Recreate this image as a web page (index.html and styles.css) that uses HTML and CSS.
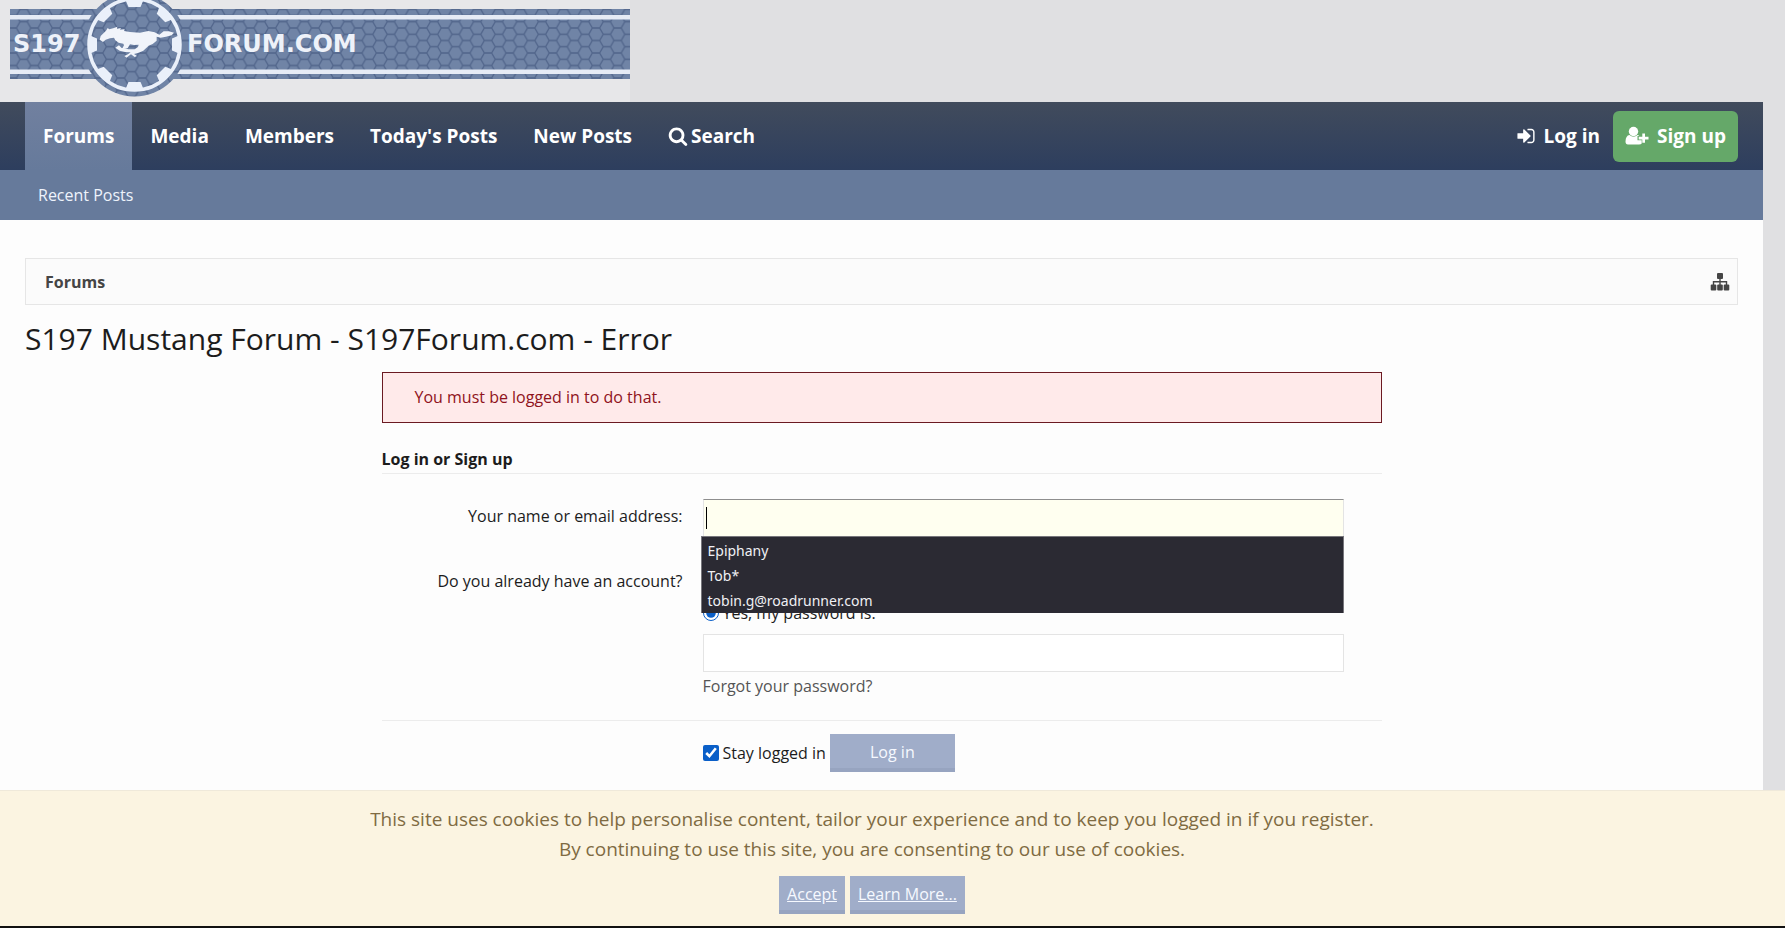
FILE: index.html
```html
<!DOCTYPE html>
<html lang="en">
<head>
    <meta charset="UTF-8">
    <meta name="viewport" content="width=device-width, initial-scale=1.0">
    <title>S197 Mustang Forum - S197Forum.com - Error</title>
    <link rel="stylesheet" href="styles.css">
</head>
<body>
    <header class="header">
        <a class="logo" href="#" aria-label="S197Forum.com">
            <svg width="630" height="102" viewBox="0 0 630 102">
                <defs>
                    <pattern id="hex" width="21.6" height="12.5" patternUnits="userSpaceOnUse" patternTransform="translate(2 3)">
                        <rect width="21.6" height="12.5" fill="#7084a6"/>
                        <path d="M0 6.25H3.6L7.2 0H14.4L18 6.25L14.4 12.5H7.2L3.6 6.25M18 6.25H21.6" fill="none" stroke="#50648a" stroke-width="1.3"/>
                    </pattern>
                </defs>
                <rect width="630" height="102" fill="#e7e7e9"/>
                <rect x="10" y="9" width="620" height="70" fill="url(#hex)"/>
                <path d="M10 15H630V19.500H10zM10 69.500H630V74H10z" fill="#e6ebf5"/>
                <circle cx="134.500" cy="44.500" r="52" fill="url(#hex)"/>
                <circle cx="134.500" cy="44.500" r="45.500" fill="none" stroke="#eaf0fa" stroke-width="3.500"/>
                <!-- gear teeth -->
                <g fill="#eaf0fa">
                    <path id="tooth" d="M125.500 0H143.500L140.500 7H128.500z"/>
                    <use href="#tooth" transform="rotate(45 134.500 44.500)"/>
                    <use href="#tooth" transform="rotate(90 134.500 44.500)"/>
                    <use href="#tooth" transform="rotate(135 134.500 44.500)"/>
                    <use href="#tooth" transform="rotate(180 134.500 44.500)"/>
                    <use href="#tooth" transform="rotate(225 134.500 44.500)"/>
                    <use href="#tooth" transform="rotate(270 134.500 44.500)"/>
                    <use href="#tooth" transform="rotate(315 134.500 44.500)"/>
                </g>
                <!-- running horse -->
                <path transform="scale(.3333)" fill="#f1f4fa" d="M299 119L302 108L318 92L323 84L328 88L342 84L352 80L351 86L363 84L360 89L374 88L372 93L390 96L420 98L445 93L464 97L478 104L491 94L507 94L522 98L515 106L498 110L482 113L470 110L470 122L458 132L446 137L430 152L416 158L402 162L411 168L404 171L393 163L386 168L380 173L373 168L384 163L392 157L375 156L359 152L346 143L357 136L365 144L386 148L404 148L414 141L416 134L402 135L390 133L383 145L366 147L372 136L370 131L356 128L346 121L342 113L330 115L317 119L309 126z"/>
                <g class="logo__text">
                    <text x="13" y="52">S197</text>
                    <text x="187" y="52">FORUM.COM</text>
                </g>
            </svg>
        </a>
    </header>
    <div class="page">
        <nav class="navbar">
            <ul class="navbar__tabs">
                <li class="active"><a href="#">Forums</a></li>
                <li><a href="#">Media</a></li>
                <li><a href="#">Members</a></li>
                <li><a href="#">Today's Posts</a></li>
                <li><a href="#">New Posts</a></li>
                <li><a href="#">
                    <svg width="20" height="20" viewBox="0 0 1792 1792" fill="currentColor"><path d="M1216 832q0-185-131.500-316.500t-316.500-131.500-316.500 131.500-131.500 316.500 131.500 316.500 316.500 131.500 316.500-131.500 131.500-316.500zm512 832q0 52-38 90t-90 38q-54 0-90-38l-343-342q-179 124-399 124-143 0-273.500-55.500t-225-150-150-225-55.500-273.500 55.500-273.500 150-225 225-150 273.500-55.500 273.500 55.500 225 150 150 225 55.500 273.500q0 220-124 399l343 343q37 37 37 90z"/></svg>
                    Search</a></li>
            </ul>
            <div class="navbar__user">
                <a class="login-link" href="#">
                    <svg width="20" height="20" viewBox="0 0 1792 1792" fill="currentColor"><path d="M1312 896q0 26-19 45l-544 544q-19 19-45 19t-45-19-19-45v-288h-448q-26 0-45-19t-19-45v-384q0-26 19-45t45-19h448v-288q0-26 19-45t45-19 45 19l544 544q19 19 19 45zm352-352v704q0 119-84.500 203.500t-203.500 84.500h-320q-13 0-22.500-9.500t-9.500-22.500q0-4-1-20t-.5-26.500 3-23.500 10-19.500 20.500-6.500h320q66 0 113-47t47-113v-704q0-66-47-113t-113-47h-312l-11.500-1-11.500-3-8-5.500-7-9-2-13.500q0-4-1-20t-.5-26.500 3-23.500 10-19.500 20.500-6.500h320q119 0 203.500 84.500t84.500 203.500z"/></svg>
                    Log in</a>
                <a class="signup-link" href="#">
                    <svg width="24" height="20" viewBox="0 0 24 20" fill="currentColor"><circle cx="8.500" cy="5.500" r="4.700"/><path d="M4.500 9Q8.500 12.500 12.500 9Q13.500 9.200 14.300 10H12.500V14.200H16.700V17.500Q16 18.500 14 18.500H3Q.5 18.500.5 15.500Q.7 9.500 4.500 9z"/><path d="M17.300 7.500H20V10.800H23.500V13.400H20V16.800H17.300V13.400H13.700V10.800H17.300z"/></svg>
                    Sign up</a>
            </div>
        </nav>
        <div class="subnav">
            <a href="#">Recent Posts</a>
        </div>
        <main class="content">
            <nav class="breadcrumb">
                <a href="#">Forums</a>
                <a href="#" aria-label="Open quick navigation">
                    <svg width="20" height="18" viewBox="0 0 20 18" fill="#454545"><rect x="7" y="0" width="6" height="6" rx="1"/><rect x=".7" y="11.500" width="5.600" height="6" rx="1"/><rect x="7.200" y="11.500" width="5.600" height="6" rx="1"/><rect x="13.700" y="11.500" width="5.600" height="6" rx="1"/><path d="M3.500 12V8.700H16.500V12M10 5V12" fill="none" stroke="#454545" stroke-width="1.400"/></svg>
                </a>
            </nav>
            <h1 class="title">S197 Mustang Forum - S197Forum.com - Error</h1>
            <div class="error-box">You must be logged in to do that.</div>
            <form class="login-form">
                <h2 class="login-form__heading">Log in or Sign up</h2>
                <div class="row">
                    <label class="row__label" for="login">Your name or email address:</label>
                    <div class="row__field suggest">
                        <input class="text-input text-input--focus" type="text" name="login" id="login" autocomplete="off">
                        <ul class="suggest__list">
                            <li>Epiphany</li>
                            <li>Tob*</li>
                            <li>tobin.g@roadrunner.com</li>
                        </ul>
                    </div>
                </div>
                <div class="row row--account">
                    <div class="row__label">Do you already have an account?</div>
                    <div class="row__field account">
                        <div class="choice">
                            <input type="radio" name="register" id="register_yes" checked>
                            <label for="register_yes">Yes, my password is:</label>
                        </div>
                        <input class="text-input" type="password" name="password" id="password" aria-label="Password">
                        <a class="forgot" href="#">Forgot your password?</a>
                    </div>
                </div>
                <div class="row row--submit">
                    <div class="row__field submit">
                        <input type="checkbox" name="remember" id="remember" checked>
                        <label for="remember">Stay logged in</label>
                        <button class="button button--login" type="submit">Log in</button>
                    </div>
                </div>
            </form>
        </main>
    </div>
    <div class="notice">
        <p>This site uses cookies to help personalise content, tailor your experience and to keep you logged in if you register.<br>
        By continuing to use this site, you are consenting to our use of cookies.</p>
        <div class="notice__buttons">
            <a class="button" href="#">Accept</a>
            <a class="button" href="#">Learn More...</a>
        </div>
    </div>
</body>
</html>
```
FILE: styles.css
```css
* {
    box-sizing: border-box;
}
body {
    margin: 0;
    background: #e0e0e2;
    color: #1c1c1c;
    font-family: "Open Sans", "Noto Sans", sans-serif;
    font-size: 16px;
    line-height: 24px;
}
a {
    color: inherit;
    text-decoration: none;
}
ul {
    list-style: none;
    margin: 0;
    padding: 0;
}
svg {
    display: block;
    flex-shrink: 0;
}
.logo {
    display: inline-block;
    vertical-align: top;
}
.logo__text {
    fill: #eef2f9;
    font-family: "DejaVu Sans", sans-serif;
    font-size: 24px;
    font-weight: bold;
}
.page {
    min-height: calc(100vh - 102px);
    margin-right: 22px;
    background: #fdfdfd;
}

/* navigation */
.navbar {
    display: flex;
    justify-content: space-between;
    height: 68px;
    padding: 0 25px;
    background: linear-gradient(#414b5c, #2d3e5e);
    color: #fff;
    font-size: 19px;
    font-weight: 700;
}
.navbar__tabs {
    display: flex;
}
.navbar__tabs a {
    display: flex;
    align-items: center;
    gap: 3px;
    height: 100%;
    padding: 0 18px;
}
.navbar__tabs .active {
    background: linear-gradient(#71809f, #667a9b);
}
.navbar__user {
    display: flex;
    align-items: center;
    gap: 13px;
}
.login-link,
.signup-link {
    display: flex;
    align-items: center;
    gap: 8px;
}
.signup-link {
    height: 51px;
    padding: 0 12px;
    background: #65a869;
    border-radius: 6px;
}
.subnav {
    padding: 13px 38px;
    background: #667a9b;
    color: #eef3fb;
}

/* content */
.content {
    padding: 38px 25px 0;
}
.breadcrumb {
    display: flex;
    justify-content: space-between;
    align-items: center;
    height: 47px;
    padding: 0 7px 0 19px;
    background: #fbfbfb;
    border: 1px solid #e6e6e6;
    color: #454545;
    font-weight: 700;
}
.title {
    margin: 13px 0 12px;
    font-size: 30px;
    font-weight: 400;
    line-height: 42px;
}
.error-box {
    max-width: 1000px;
    margin: 0 auto;
    padding: 12px 32px 13px;
    background: #ffeaea;
    border: 1px solid #6b1a22;
    color: #8f1320;
}
.login-form {
    max-width: 1000px;
    margin: 24px auto 0;
}
.login-form__heading {
    margin: 0 0 25px;
    padding-bottom: 2px;
    border-bottom: 1px solid #ececec;
    font-size: 16px;
    line-height: 24px;
}
.row {
    display: flex;
}
.row__label {
    width: 301px;
    padding-top: 5px;
    text-align: right;
}
.row__field {
    flex: 1;
    margin: 0 38px 0 20px;
}
.text-input {
    display: block;
    width: 100%;
    height: 38px;
    padding: 4px;
    background: #fff;
    border: 1px solid #e4e4e4;
    font: inherit;
}
.text-input--focus {
    background: #fffff0;
    border-top-color: #8e8e8e;
}
.suggest {
    position: relative;
}
/* text caret */
.suggest::before {
    content: "";
    position: absolute;
    top: 8px;
    left: 3px;
    width: 1px;
    height: 22px;
    background: #000;
}
.suggest__list {
    position: absolute;
    top: 37px;
    left: -2px;
    right: 0;
    padding: 1px 6px 0;
    background: #2b2a33;
    border: 1px solid #77767c;
    border-bottom: 0;
    color: #f0f0f4;
    font-family: "Noto Sans", sans-serif;
    font-size: 14px;
    line-height: 25px;
    z-index: 1;
}
.row--account {
    margin-top: 27px;
}
.account {
    padding-top: 37px;
}
.choice,
.submit {
    display: flex;
    align-items: center;
    gap: 4px;
}
.choice input,
.submit input {
    width: 16px;
    height: 16px;
    margin: 0;
    accent-color: #0a5fc8;
}
.choice {
    margin-bottom: 9px;
}
.forgot {
    display: inline-block;
    margin-top: 2px;
    color: #555;
}
.row--submit {
    margin-top: 22px;
    padding: 13px 0 0 301px;
    border-top: 1px solid #ececec;
}
.button {
    padding: 6px 8px 8px;
    background: #a0adc9;
    border: 0;
    box-shadow: inset 0 -4px 0 #97a4c0;
    color: #f6f9ff;
    font: inherit;
    line-height: 24px;
    text-decoration: underline;
}
.button--login {
    width: 125px;
    text-decoration: none;
}

/* cookie notice */
.notice {
    position: fixed;
    left: 0;
    right: 0;
    bottom: 0;
    padding: 13px 41px 12px 0;
    background: #fbf4e1;
    border-top: 1px solid #efe9da;
    border-bottom: 2px solid #111;
    color: #7f6b42;
    font-size: 19px;
    line-height: 30px;
    text-align: center;
    z-index: 2;
}
.notice p {
    margin: 0 0 12px;
}
.notice__buttons {
    display: flex;
    justify-content: center;
    gap: 5px;
    font-size: 16px;
}
```
